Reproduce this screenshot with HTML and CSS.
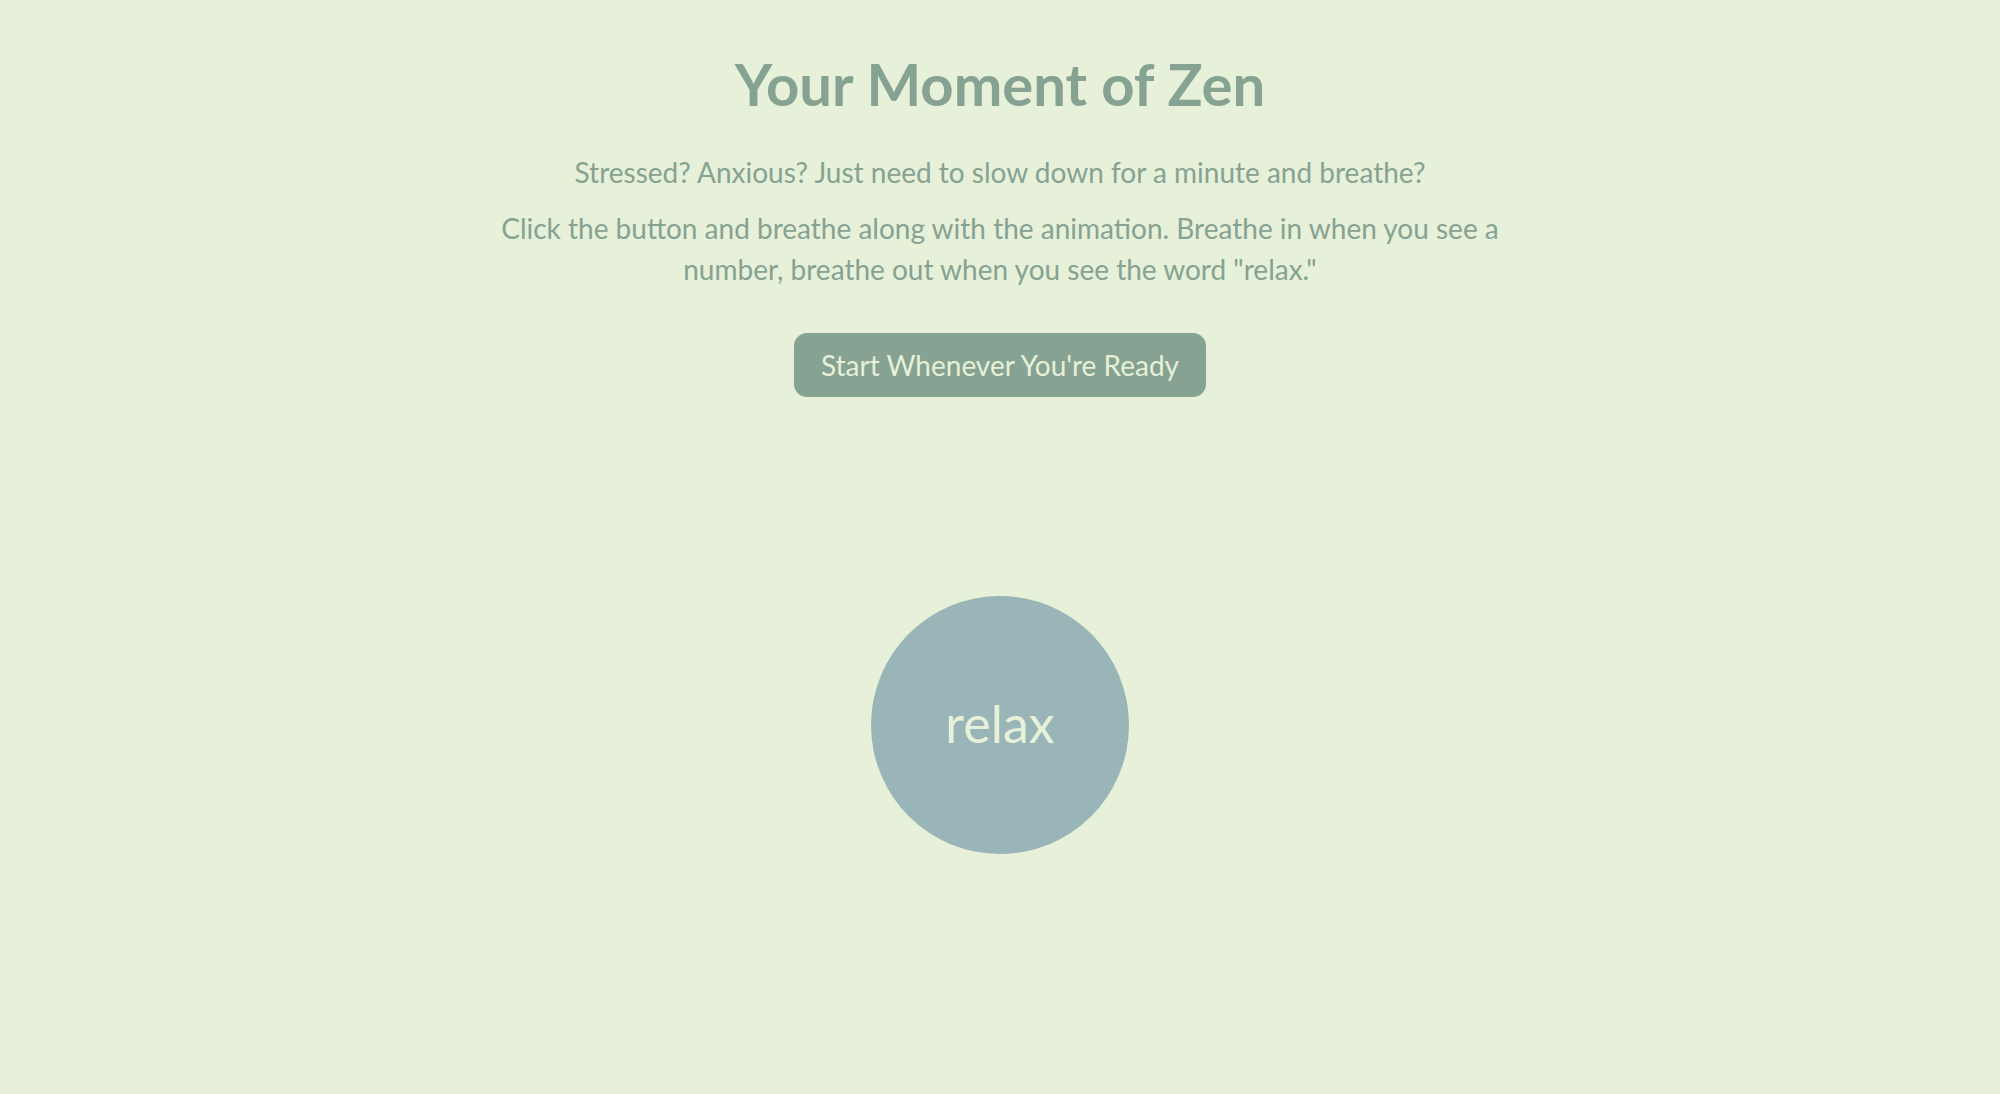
FILE: index.html
```html
<!DOCTYPE html>
<html lang="en">
<head>
<meta charset="utf-8">
<title>Your Moment of Zen</title>
<link rel="stylesheet" href="styles.css">
</head>
<body>
<main class="page">
  <h1 class="title">Your Moment of Zen</h1>
  <p class="lead">Stressed? Anxious? Just need to slow down for a minute and breathe?</p>
  <p class="lead lead-wide">Click the button and breathe along with the animation. Breathe in when you see a number, breathe out when you see the word "relax."</p>
  <button class="start">Start Whenever You're Ready</button>
  <div class="circle"><span class="circle-text">relax</span></div>
</main>
</body>
</html>
```
FILE: styles.css
```css
html, body {
  margin: 0;
  padding: 0;
  background: #e7f0d8;
}
body {
  font-family: Lato, "Open Sans", sans-serif;
  color: #86a292;
}
.page {
  display: flex;
  flex-direction: column;
  align-items: center;
  text-align: center;
  padding-top: 48px;
}
.title {
  margin: 0;
  font-size: 58px;
  line-height: 72px;
  font-weight: 700;
  color: #86a292;
}
.lead {
  margin: 0;
  font-size: 28px;
  line-height: 41px;
  max-width: 1025px;
}
.title + .lead {
  margin-top: 32px;
}
.lead-wide {
  margin-top: 15px;
}
.start {
  margin-top: 43px;
  width: 412px;
  height: 64px;
  border: none;
  border-radius: 13px;
  background: #86a292;
  color: #e7f0d8;
  font-family: Lato, "Open Sans", sans-serif;
  font-size: 28px;
  cursor: pointer;
}
.circle {
  margin-top: 199px;
  width: 258px;
  height: 258px;
  border-radius: 50%;
  background: #99b5b7;
  display: flex;
  align-items: center;
  justify-content: center;
}
.circle-text {
  color: #e7f0d8;
  font-size: 52px;
  padding-bottom: 5px;
}
```
